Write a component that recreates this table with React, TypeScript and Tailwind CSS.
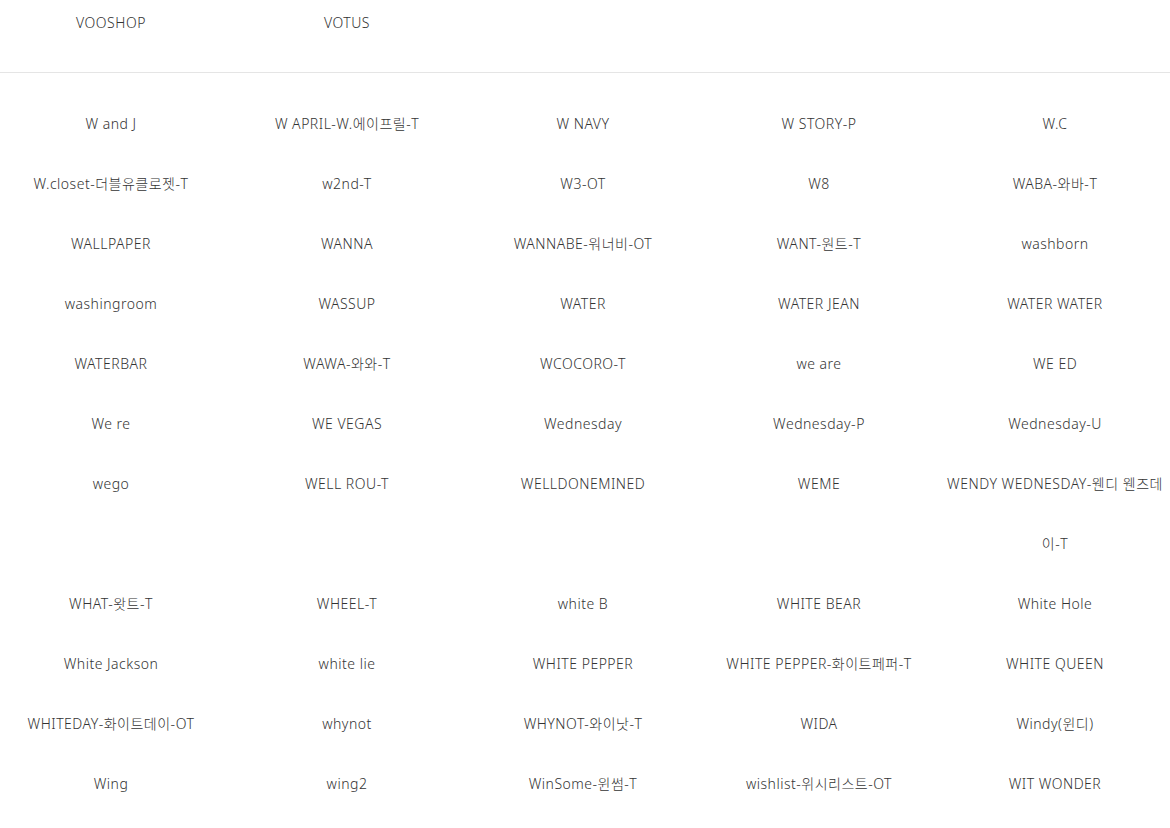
const topBrands = ["VOOSHOP", "VOTUS"];

const brands = [
  "W and J",
  "W APRIL-W.에이프릴-T",
  "W NAVY",
  "W STORY-P",
  "W.C",
  "W.closet-더블유클로젯-T",
  "w2nd-T",
  "W3-OT",
  "W8",
  "WABA-와바-T",
  "WALLPAPER",
  "WANNA",
  "WANNABE-워너비-OT",
  "WANT-원트-T",
  "washborn",
  "washingroom",
  "WASSUP",
  "WATER",
  "WATER JEAN",
  "WATER WATER",
  "WATERBAR",
  "WAWA-와와-T",
  "WCOCORO-T",
  "we are",
  "WE ED",
  "We re",
  "WE VEGAS",
  "Wednesday",
  "Wednesday-P",
  "Wednesday-U",
  "wego",
  "WELL ROU-T",
  "WELLDONEMINED",
  "WEME",
  "WENDY WEDNESDAY-웬디 웬즈데이-T",
  "WHAT-왓트-T",
  "WHEEL-T",
  "white B",
  "WHITE BEAR",
  "White Hole",
  "White Jackson",
  "white lie",
  "WHITE PEPPER",
  "WHITE PEPPER-화이트페퍼-T",
  "WHITE QUEEN",
  "WHITEDAY-화이트데이-OT",
  "whynot",
  "WHYNOT-와이낫-T",
  "WIDA",
  "Windy(윈디)",
  "Wing",
  "wing2",
  "WinSome-윈썸-T",
  "wishlist-위시리스트-OT",
  "WIT WONDER",
];

export default function App() {
  return (
    <div
      className="w-[1170px] h-[828px] overflow-hidden bg-white text-[#333] text-[14px] font-light tracking-[0.5px]"
      style={{ fontFamily: '"Noto Sans", "Noto Sans CJK KR", sans-serif' }}
    >
      {/* previous letter (tail) */}
      <section className="pt-[1px] pb-[27px] border-b border-[#e5e5e5]">
        <ul className="grid grid-cols-[repeat(5,222px)] gap-x-[14px]">
          {topBrands.map((b) => (
            <li key={b} className="text-center leading-[44px]">
              <a href="#" className="text-[#333] no-underline">
                {b}
              </a>
            </li>
          ))}
        </ul>
      </section>

      {/* W */}
      <section className="pt-[21px]">
        <ul className="grid grid-cols-[repeat(5,222px)] gap-x-[14px]">
          {brands.map((b) => (
            <li key={b} className="text-center leading-[60px]">
              <a href="#" className="text-[#333] no-underline">
                {b}
              </a>
            </li>
          ))}
        </ul>
      </section>
    </div>
  );
}
